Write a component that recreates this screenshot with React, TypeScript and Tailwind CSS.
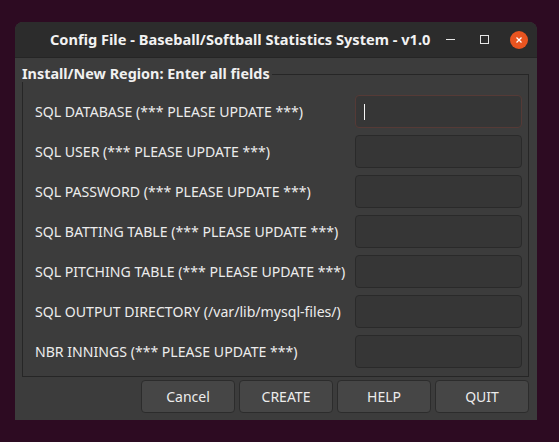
import React from 'react';

const fields = [
  'SQL DATABASE (*** PLEASE UPDATE ***)',
  'SQL USER (*** PLEASE UPDATE ***)',
  'SQL PASSWORD (*** PLEASE UPDATE ***)',
  'SQL BATTING TABLE (*** PLEASE UPDATE ***)',
  'SQL PITCHING TABLE (*** PLEASE UPDATE ***)',
  'SQL OUTPUT DIRECTORY (/var/lib/mysql-files/)',
  'NBR INNINGS (*** PLEASE UPDATE ***)',
];

const buttons = ['Cancel', 'CREATE', 'HELP', 'QUIT'];

export default function App() {
  return (
    <div
      className="w-[559px] h-[442px] bg-[#2d0b22] pt-[22px] pl-[15px] overflow-hidden"
      style={{ fontFamily: '"Noto Sans", "Open Sans", sans-serif' }}
    >
      <div className="w-[522px] h-[398px] rounded-t-[8px] bg-[#3c3c3c] overflow-hidden flex flex-col">
        {/* Title bar */}
        <div className="h-[36px] bg-[#2c2c2c] border-b border-[#252525] flex items-center shrink-0">
          <div className="pl-[35px] w-[420px] text-[14.6px] font-bold text-[#f2f2f2] whitespace-nowrap">
            Config File - Baseball/Softball Statistics System - v1.0
          </div>
          <div className="flex items-center">
            <div className="w-[9px] h-[1px] bg-[#e6e6e6] ml-[11px]" />
            <div className="w-[9px] h-[9px] border border-[#e6e6e6] ml-[25px]" />
            <div className="w-[18px] h-[18px] rounded-full bg-[#e95420] ml-[21px] flex items-center justify-center">
              <svg width="8" height="8" viewBox="0 0 8 8">
                <path d="M1.5 1.5 L6.5 6.5 M6.5 1.5 L1.5 6.5" stroke="#fff" strokeWidth="1.3" />
              </svg>
            </div>
          </div>
        </div>

        {/* Body */}
        <div className="px-[7px] pr-[8px] pt-[8px]">
          <fieldset className="border border-[#262626] pl-[12px] pr-[6px] pb-[8px] pt-0 m-0 min-w-0">
            <legend className="ml-[-13px] px-0 text-[14.4px] font-bold text-[#f0f0f0] leading-[16px] pr-[2px]">
              Install/New Region: Enter all fields
            </legend>
            <div className="flex flex-col gap-[7px] pt-[13px]">
              {fields.map((f, i) => (
                <div key={f} className="flex items-center justify-between h-[33px]">
                  <span className="text-[14.1px] text-[#ececec] whitespace-nowrap">{f}</span>
                  <div
                    className={
                      i === 0
                        ? 'w-[167px] h-[33px] rounded-[4px] bg-[#363636] border border-[#553a36] flex items-center pl-[8px]'
                        : 'w-[167px] h-[33px] rounded-[4px] bg-[#363636] border border-[#2a2a2a]'
                    }
                  >
                    {i === 0 && <div className="w-[1px] h-[16px] bg-[#f5f5f5]" />}
                  </div>
                </div>
              ))}
            </div>
          </fieldset>
          <div className="flex justify-end gap-[4px] pt-[3px]">
            {buttons.map((b) => (
              <div
                key={b}
                className="w-[94px] h-[33px] rounded-[4px] bg-[#464646] border border-[#2c2c2c] flex items-center justify-center text-[14px] text-[#ececec]"
              >
                {b}
              </div>
            ))}
          </div>
        </div>
      </div>
    </div>
  );
}
